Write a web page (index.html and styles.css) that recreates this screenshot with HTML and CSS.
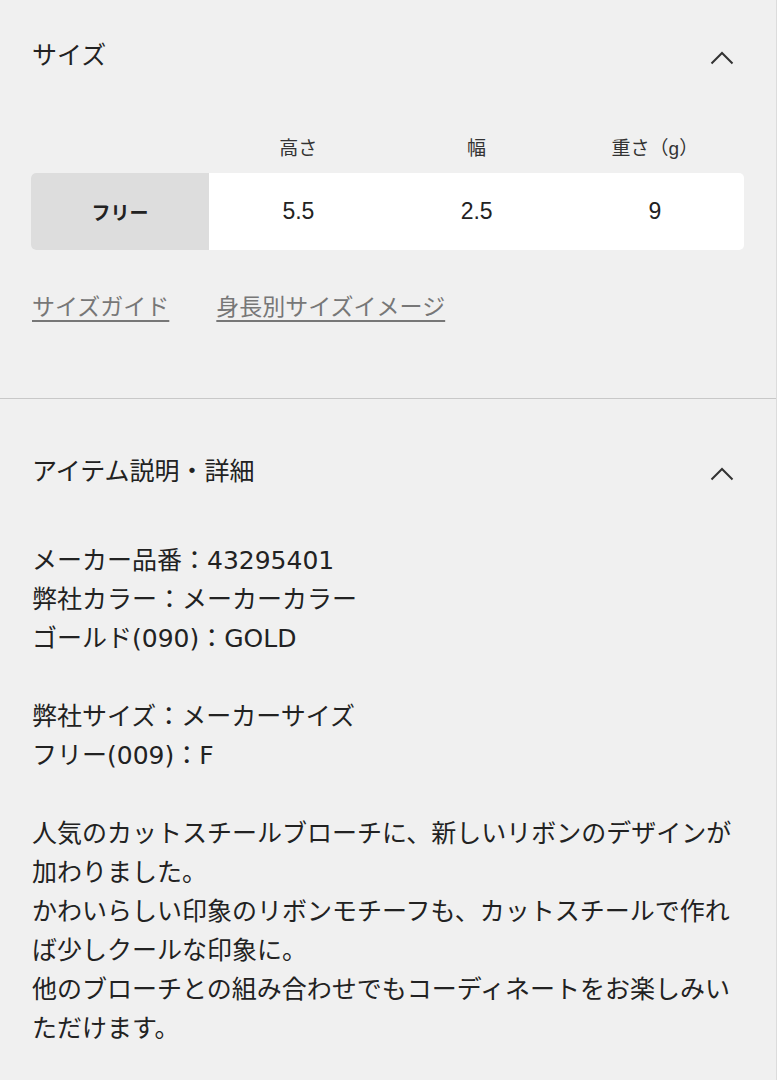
FILE: index.html
```html
<!DOCTYPE html>
<html lang="ja">
<head>
<meta charset="utf-8">
<title>サイズ</title>
<link rel="stylesheet" href="styles.css">
</head>
<body>
<div class="page">
  <section class="panel panel-size">
    <div class="panel-head">
      <h2 class="panel-title">サイズ</h2>
      <svg class="chevron" width="24" height="14" viewBox="0 0 24 14"><path d="M1.5 12.5 L12 2 L22.5 12.5" fill="none" stroke="#333" stroke-width="2"/></svg>
    </div>
    <div class="size-head">
      <span></span>
      <span>高さ</span>
      <span>幅</span>
      <span>重さ（g）</span>
    </div>
    <div class="size-row">
      <span class="size-name">フリー</span>
      <span>5.5</span>
      <span>2.5</span>
      <span>9</span>
    </div>
    <div class="links">
      <a class="link" href="#">サイズガイド</a>
      <a class="link" href="#">身長別サイズイメージ</a>
    </div>
  </section>
  <section class="panel panel-detail">
    <div class="panel-head">
      <h2 class="panel-title">アイテム説明・詳細</h2>
      <svg class="chevron" width="24" height="14" viewBox="0 0 24 14"><path d="M1.5 12.5 L12 2 L22.5 12.5" fill="none" stroke="#333" stroke-width="2"/></svg>
    </div>
    <div class="detail">
      <p>メーカー品番：43295401<br>弊社カラー：メーカーカラー<br>ゴールド(090)：GOLD</p>
      <p>弊社サイズ：メーカーサイズ<br>フリー(009)：F</p>
      <p>人気のカットスチールブローチに、新しいリボンのデザインが加わりました。<br>かわいらしい印象のリボンモチーフも、カットスチールで作れば少しクールな印象に。<br>他のブローチとの組み合わせでもコーディネートをお楽しみいただけます。</p>
    </div>
  </section>
</div>
</body>
</html>
```
FILE: styles.css
```css
html, body {
  margin: 0;
  padding: 0;
  background: #f0f0f0;
}
body {
  font-family: "Liberation Sans", "Noto Sans CJK JP", sans-serif;
  color: #222;
}
.page {
  width: 776px;
  min-height: 1080px;
  border-right: 1px solid #dcdcdc;
}
.panel {
  padding: 37px 32px 0 31px;
}
.panel-size {
  padding-bottom: 74px;
  border-bottom: 1px solid #c8c8c8;
}
.panel-detail {
  padding-top: 54px;
}
.panel-head {
  display: flex;
  justify-content: space-between;
  align-items: center;
  height: 36px;
}
.panel-title {
  margin: 0 0 0 1px;
  font-size: 25px;
  font-weight: normal;
  line-height: 36px;
  color: #222;
}
.chevron {
  margin-right: 10px;
  margin-top: 5px;
}
.size-head {
  display: grid;
  grid-template-columns: repeat(4, 1fr);
  margin-top: 62px;
  line-height: 28px;
  font-size: 19px;
  color: #333;
  text-align: center;
}
.size-row {
  display: grid;
  grid-template-columns: repeat(4, 1fr);
  margin-top: 10px;
  height: 77px;
  background: #fff;
  border-radius: 5px;
  overflow: hidden;
  font-size: 23px;
  text-align: center;
  color: #222;
}
.size-row span {
  display: flex;
  align-items: center;
  justify-content: center;
}
.size-row .size-name {
  background: #dddddd;
  font-weight: bold;
  font-size: 19px;
}
.links {
  display: flex;
  gap: 47px;
  margin-top: 40px;
  padding-left: 1px;
  line-height: 34px;
}
.link {
  font-size: 23px;
  color: #777;
  text-decoration: underline;
  text-underline-offset: 5px;
  text-decoration-thickness: 2px;
}
.detail {
  margin-top: 52px;
  padding-left: 1px;
  font-family: "DejaVu Sans", "Noto Sans CJK JP", sans-serif;
  font-size: 25px;
  line-height: 39px;
  color: #222;
}
.detail p {
  margin: 0 0 39px;
}
```
